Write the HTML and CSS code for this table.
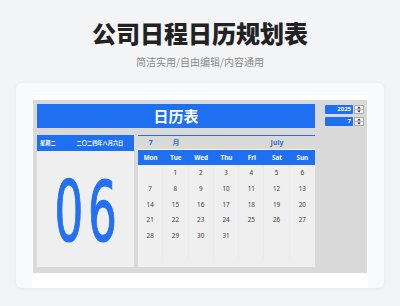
FILE: index.html
```html
<!DOCTYPE html>
<html lang="zh-CN">
<head>
<meta charset="utf-8">
<title>公司日程日历规划表</title>
<link rel="stylesheet" href="styles.css">
</head>
<body>
<h1 class="title">公司日程日历规划表</h1>
<p class="subtitle">简洁实用/自由编辑/内容通用</p>
<div class="card">
  <div class="sheet">
    <div class="board">
      <div class="main">
        <div class="banner">日历表</div>
        <div class="panels">
          <div class="left">
            <div class="left-head"><span>星期二</span><span>二〇二四年八月六日</span></div>
            <div class="left-body"><span class="bigday">06</span></div>
          </div>
          <div class="right">
            <div class="month-row">
              <span>7</span><span>月</span><span></span><span></span><span></span><span>July</span><span></span>
            </div>
            <div class="week-head">
              <span>Mon</span><span>Tue</span><span>Wed</span><span>Thu</span><span>Fri</span><span>Sat</span><span>Sun</span>
            </div>
            <div class="days">
              <span></span><span>1</span><span>2</span><span>3</span><span>4</span><span>5</span><span>6</span>
              <span>7</span><span>8</span><span>9</span><span>10</span><span>11</span><span>12</span><span>13</span>
              <span>14</span><span>15</span><span>16</span><span>17</span><span>18</span><span>19</span><span>20</span>
              <span>21</span><span>22</span><span>23</span><span>24</span><span>25</span><span>26</span><span>27</span>
              <span>28</span><span>29</span><span>30</span><span>31</span><span></span><span></span><span></span>
              <span></span><span></span><span></span><span></span><span></span><span></span><span></span>
            </div>
          </div>
        </div>
      </div>
      <div class="side">
        <div class="spin"><div class="spin-val">2025</div><div class="spin-btns"><div class="btn"><svg viewBox="0 0 6 4" width="4" height="3"><path d="M3 0.5L5.5 3.5H0.5Z" fill="#222"/></svg></div><div class="btn"><svg viewBox="0 0 6 4" width="4" height="3"><path d="M0.5 0.5H5.5L3 3.5Z" fill="#222"/></svg></div></div></div>
        <div class="spin"><div class="spin-val">7</div><div class="spin-btns"><div class="btn"><svg viewBox="0 0 6 4" width="4" height="3"><path d="M3 0.5L5.5 3.5H0.5Z" fill="#222"/></svg></div><div class="btn"><svg viewBox="0 0 6 4" width="4" height="3"><path d="M0.5 0.5H5.5L3 3.5Z" fill="#222"/></svg></div></div></div>
      </div>
    </div>
  </div>
</div>
</body>
</html>
```
FILE: styles.css
```css
* { box-sizing: border-box; }
html, body { margin: 0; padding: 0; }
body {
  width: 400px;
  height: 306px;
  overflow: hidden;
  background: #f3f4f6;
  font-family: "Noto Sans", "Noto Sans CJK SC", sans-serif;
}
.title {
  margin: 19px 0 0;
  text-align: center;
  font-family: "Noto Sans CJK SC", sans-serif;
  font-weight: 900;
  font-size: 24px;
  line-height: 28px;
  color: #222;
}
.subtitle {
  margin: 8px 0 0;
  text-align: center;
  font-family: "Noto Sans CJK SC", sans-serif;
  font-size: 10px;
  line-height: 14px;
  color: #8a8a8a;
}
.card {
  margin: 14px 16px 0;
  height: 205px;
  background: #f9fafb;
  border-radius: 6px;
  box-shadow: 0 1px 4px rgba(0,0,0,0.06);
  padding: 12px 16px 0;
  display: flex;
  overflow: hidden;
}
.sheet {
  flex: 1;
  background: #fff;
  padding: 5px 1px 15px;
  display: flex;
}
.board {
  flex: 1;
  background: #d9d9d9;
  padding: 4px 0 6px 4px;
  display: flex;
}
.main {
  width: 278px;
  display: flex;
  flex-direction: column;
}
.banner {
  height: 24px;
  background: #1f6ff3;
  color: #fff;
  font-family: "Noto Sans CJK SC", sans-serif;
  font-weight: 700;
  font-size: 15px;
  line-height: 24px;
  text-align: center;
}
.panels {
  margin-top: 7px;
  height: 132px;
  display: flex;
  gap: 4px;
}
.left {
  width: 97px;
  display: flex;
  flex-direction: column;
}
.left-head {
  height: 16px;
  background: #1f6ff3;
  color: #fff;
  font-family: "Noto Sans CJK SC", sans-serif;
  font-weight: 700;
  font-size: 5.2px;
  line-height: 16px;
  display: flex;
  gap: 21px;
  padding-left: 3px;
}
.left-body {
  flex: 1;
  background: #efefef;
  display: flex;
  align-items: center;
  justify-content: center;
  overflow: hidden;
}
.bigday {
  font-family: "DejaVu Sans", sans-serif;
  font-stretch: condensed;
  font-size: 84px;
  line-height: 84px;
  color: #2371f0;
  -webkit-text-stroke: 1.2px #2371f0;
  transform: scaleX(0.6);
  letter-spacing: 8px;
  margin: 6px 0 0 6px;
}
.right {
  width: 177px;
  display: flex;
  flex-direction: column;
  border-top: 1px solid #2a6fe0;
}
.month-row, .week-head, .days {
  display: grid;
  grid-template-columns: repeat(7, 1fr);
  text-align: center;
}
.month-row {
  height: 14px;
  line-height: 14px;
  color: #2f6fd8;
  font-family: "Noto Sans", "Noto Sans CJK SC", sans-serif;
  font-weight: 700;
  font-size: 7px;
  border-bottom: 1px solid #f4f4f4;
}
.week-head {
  height: 15px;
  line-height: 15px;
  background: #1f6ff3;
  color: #fff;
  font-weight: 700;
  font-size: 6.3px;
}
.days {
  flex: 1;
  background: #efefef;
  grid-auto-rows: 15.75px;
  align-content: start;
  font-size: 6.3px;
  color: #3a3a3a;
}
.days span {
  line-height: 15.75px;
  border-right: 1px solid #ebebeb;
}
.days span:nth-child(7n) { border-right: none; }
.side {
  margin-left: 10px;
  padding-top: 1px;
  display: flex;
  flex-direction: column;
  gap: 3px;
}
.spin {
  display: flex;
  height: 9px;
}
.spin-val {
  width: 28px;
  height: 9px;
  background: #1f6ff3;
  color: #fff;
  font-weight: 700;
  font-size: 6px;
  line-height: 9px;
  text-align: right;
  padding-right: 2px;
  border-radius: 1px;
}
.spin-btns {
  width: 10px;
  margin-left: 1px;
  display: flex;
  flex-direction: column;
  border: 1px solid #aaa;
  background: #f2f2f2;
}
.btn {
  flex: 1;
  display: flex;
  align-items: center;
  justify-content: center;
  overflow: hidden;
}
.btn + .btn { border-top: 1px solid #bbb; }
```
